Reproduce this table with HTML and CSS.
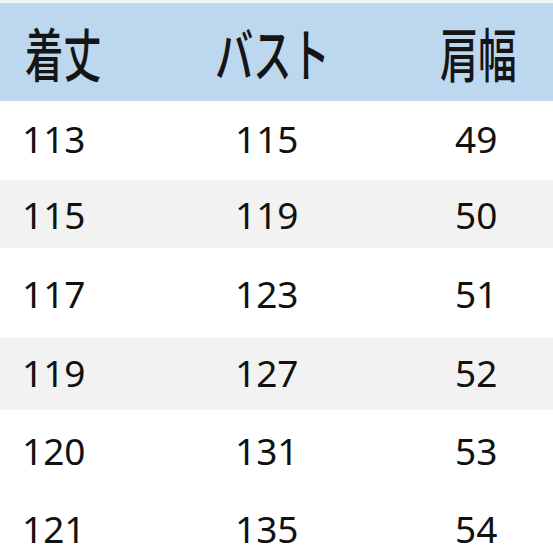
FILE: index.html
```html
<!DOCTYPE html>
<html lang="ja">
<head>
<meta charset="utf-8">
<link rel="stylesheet" href="styles.css">
</head>
<body>
<div class="sheet">
  <div class="head">
    <div class="hcell h1"><span class="sq">着丈</span></div>
    <div class="hcell h2"><span class="sq">バスト</span></div>
    <div class="hcell h3"><span class="sq">肩幅</span></div>
  </div>
  <div class="row r1"><span>113</span><span>115</span><span>49</span></div>
  <div class="row r2 gray"><span>115</span><span>119</span><span>50</span></div>
  <div class="row r3"><span>117</span><span>123</span><span>51</span></div>
  <div class="row r4 gray"><span>119</span><span>127</span><span>52</span></div>
  <div class="row r5"><span>120</span><span>131</span><span>53</span></div>
  <div class="row r6"><span>121</span><span>135</span><span>54</span></div>
</div>
</body>
</html>
```
FILE: styles.css
```css
html, body {
  margin: 0;
  padding: 0;
  background: #ffffff;
}
.sheet {
  width: 553px;
  height: 553px;
  overflow: hidden;
  display: flex;
  flex-direction: column;
  border-top: 3px solid #eef3f8;
  box-sizing: border-box;
}
.head {
  height: 98px;
  flex: none;
  background: #bdd7ee;
  display: grid;
  grid-template-columns: 190px 225px 1fr;
  padding-left: 25px;
  align-items: center;
}
.hcell {
  font-family: "Noto Sans CJK JP", sans-serif;
  font-weight: 500;
  font-size: 58px;
  line-height: 1;
  color: #151515;
  white-space: nowrap;
}
.sq {
  display: inline-block;
  transform: scaleX(0.66);
  transform-origin: left center;
}
.row {
  flex: none;
  display: grid;
  grid-template-columns: 213px 220px 1fr;
  padding-left: 22px;
  align-items: center;
  font-family: "Noto Sans", sans-serif;
  font-size: 37px;
  color: #111111;
  line-height: 1;
  box-sizing: border-box;
}
.gray { background: #f2f2f2; }
.r1 { height: 79px; padding-bottom: 4px; }
.r2 { height: 68px; }
.r3 { height: 90px; }
.r4 { height: 72px; padding-bottom: 3px; }
.r5 { height: 80px; }
.r6 { flex: 1 1 auto; align-items: start; padding-top: 20px; }
```
